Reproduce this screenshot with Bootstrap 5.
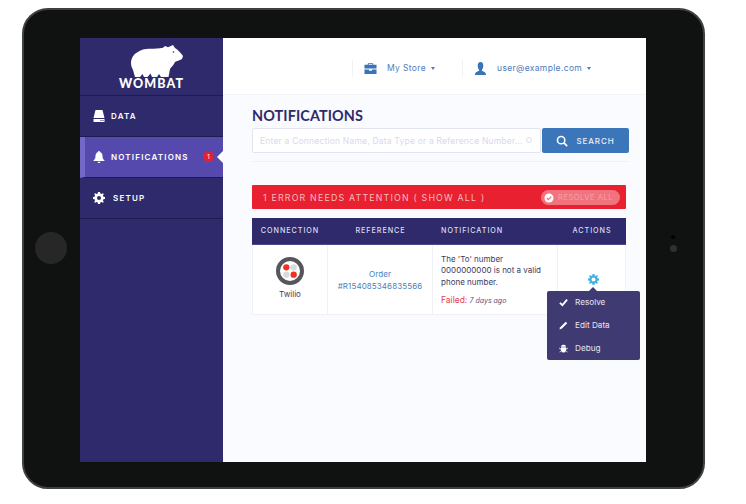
<!DOCTYPE html>
<html lang="en"><head><meta charset="utf-8"><title>Wombat</title>
<link rel="stylesheet" href="https://cdn.jsdelivr.net/npm/bootstrap@5.3.0/dist/css/bootstrap.min.css">
<style>
html,body{height:504px;overflow:hidden;background:#fff}
body{font-family:Inter,"Liberation Sans",sans-serif;padding:8px 41px 15px 22px}
.tablet{position:relative;height:481px;background:#101111;border:2px solid #404040;border-radius:26px;padding:28px 57px 25px 56px}
.homebtn{position:absolute;left:11px;top:222px;width:32px;height:32px;border-radius:50%;background:#272727}
.cam1{position:absolute;left:647px;top:225px;width:4px;height:4px;border-radius:50%;background:#000}
.cam2{position:absolute;left:646px;top:235px;width:7px;height:7px;border-radius:50%;background:#303030}
.screen{height:424px;background:#f9fbfe}
.side{width:143px;flex:none;background:#2f2a6b}
.logo{height:58px;border-bottom:1px solid #1f1b50;padding-top:7px}
.logo svg{margin-left:11px}
.logo span{font-family:Lato,sans-serif;font-weight:900;font-size:12.5px;letter-spacing:1.1px;line-height:13px;color:#fff}
.sidelink{height:41px;padding:0 0 0 13px;color:#fff;font-size:8px;font-weight:600;letter-spacing:1.2px;border-bottom:1px solid #1f1b50;position:relative}
.sidelink:hover{color:#fff}
.sidelink svg{width:12px;height:12px;margin-right:6px;flex:none}
.sidelink.on{background:#5549ad;border-left:5px solid #7268c6;padding-left:8px}
.sidelink.on::after{content:"";position:absolute;right:0;top:14px;border:6px solid transparent;border-right-color:#fff;border-left:0}
.setuptxt{margin-left:2px}
.cnt{width:11px;height:11px;border-radius:50%;background:#e3202f;color:#fff;font-size:6px;letter-spacing:0;font-weight:400;position:absolute;left:118px;top:14px}
.main{min-width:0}
.top{height:57px;background:#fff;border-bottom:1px solid #f0f3f8;padding-top:22px;color:#4a7dbb;font-size:8.5px;letter-spacing:.35px}
.topitem{height:17px;border-left:1px solid #eef1f6;padding-left:11px}
.topitem svg{width:13px;height:13px;color:#3a74b8}
.topitem span{margin-left:10px}
.store{margin-left:129px;width:110px}
.caret{width:0;height:0;border:2.5px solid transparent;border-top:3px solid #4a7dbb;border-bottom:0;margin-left:5px}
.work{padding:0 17px 0 29px}
.ttl{font-family:Lato,sans-serif;font-weight:700;font-size:14.4px;letter-spacing:.1px;color:#2f2a6b;line-height:18px;margin:12px 0 3px}
.srch{height:26px;gap:1px;position:relative}
.srchin{height:25px;width:289px;flex:none;font-size:8.5px;letter-spacing:.2px;border:1px solid #e2e4f2;border-radius:2px;padding:0 7px;background:#fff;color:#dddcf0}
.srchin::placeholder{color:#d9d8ee;opacity:1}
.srchdot{position:absolute;left:274px;top:9px;width:6px;height:6px;border:1px solid #dcdcee;border-radius:50%}
.srchbtn{width:87px;height:25px;background:#3b76bb;color:#e9f0f8;border:0;border-radius:2px;font-size:8px;letter-spacing:.9px;font-weight:500;padding:0}
.srchbtn:hover{background:#3b76bb;color:#e9f0f8}
.srchbtn svg{width:12px;height:12px}
.rule{height:1px;background:#eef1f5;margin:7px 0 23px}
.errbar{width:374px;height:24px;background:#e8202f;color:#f9bcc0;font-size:8.8px;letter-spacing:1.2px;border-radius:1px;padding:1px 6px 0 11px;margin-bottom:9px}
.resolve{width:79px;height:15px;border-radius:8px;background:#f0737d;color:#f7a1a8;font-size:7.5px;letter-spacing:.55px;padding-left:3px;gap:4px}
.resolve svg{width:10px;height:10px}
.notes{width:374px;table-layout:fixed;border-collapse:separate;border-spacing:0;margin:0;background:#fff;font-size:8px;color:#3d3a64}
.notes th{background:#2f2a6b;color:#dcdcee;font-size:7.2px;font-weight:500;letter-spacing:.95px;height:27px;padding:0;text-align:center;border-bottom:1px solid #4d4a8a}
.notes td{height:70px;border-right:1px solid #eff1f5;border-bottom:1px solid #eff1f5;padding:0;text-align:center;vertical-align:middle}
.notes td:first-child{border-left:1px solid #eff1f5;padding-bottom:3px}
.notes td.msg{text-align:left;padding:1px 14px 0 8px;line-height:11.7px}
.notes th.msgh{text-align:left;padding-left:8px}
.notes td.ref{padding-top:1px}
.ref{color:#4d81bd;letter-spacing:.1px;line-height:12px}
.twilio{box-sizing:border-box;width:28px;height:28px;border-radius:50%;border:4.5px solid #55555a;margin:0 auto 3px;display:block}
.fail{color:#e8404a;font-size:8.5px}
.ago{font-style:italic;font-size:7px;color:#55527a}
.msg p{margin:0 0 6px}
.gear{width:11px;height:11px;color:#3fb0e0;position:absolute;left:336px;top:56px}
.actmenu{position:absolute;left:295px;top:73px;width:93px;height:69px;min-width:0;display:block;background:#3f3a71;border:0;border-radius:2px;padding:0;margin:0;font-size:8.2px;z-index:2}
.actmenu::before{content:"";position:absolute;left:42px;top:-4px;border:4px solid transparent;border-bottom-color:#3f3a71;border-top:0}
.actmenu .dropdown-item{height:23px;color:#e6e6f2;padding:0 0 0 12px;gap:7px}
.actmenu svg{width:9px;height:9px;flex:none}
</style></head>
<body>
<div class="tablet">
 <div class="homebtn"></div><div class="cam1"></div><div class="cam2"></div>
 <div class="screen d-flex">
  <aside class="side">
   <div class="logo d-flex flex-column align-items-center">
    <svg width="52" height="32" viewBox="0 0 52 32"><path fill="#fff" d="M0 18C0 13 3 9 6 7.500C10 4.500 14 4 18 3.800C24 3.500 28 4 32 2.800L34 1L37 2.300L42 0L44 3C47 5 49.500 7.500 52 11L51 14C48 15.500 46 16 44 17C43 20 40 22 39 24L37.500 32H30L28 29L26 32H21L19.500 28.500L16.500 32H13L11.500 29L9 32H4L2 25C1 23 0 21 0 18Z"/><circle cx="42.500" cy="7" r=".8" fill="#2f2a6b"/></svg>
    <span>WOMBAT</span>
   </div>
   <nav class="nav flex-column">
    <a class="nav-link sidelink d-flex align-items-center" href="#"><svg viewBox="0 0 12 12"><path fill="#fff" d="M2.500 0H9.500L11.500 8H.5ZM.5 9H11.500V12H.5Z"/><path fill="#2f2a6b" d="M7.500 10H8.500V11H7.500ZM9.500 10H10.500V11H9.500Z"/></svg><span>DATA</span></a>
    <a class="nav-link sidelink on d-flex align-items-center" href="#"><svg viewBox="0 0 12 12"><path fill="#fff" d="M6 0C6.500 0 7 .4 7 1C9 1.500 9.500 3.500 9.500 5C9.500 7 10 8 11.500 9.500V10H.5V9.500C2 8 2.500 7 2.500 5C2.500 3.500 3 1.500 5 1C5 .4 5.500 0 6 0ZM4.500 10.800H7.500C7.300 11.600 6.700 12 6 12S4.700 11.600 4.500 10.800Z"/></svg><span>NOTIFICATIONS</span><span class="cnt d-flex align-items-center justify-content-center">1</span></a>
    <a class="nav-link sidelink d-flex align-items-center" href="#"><svg viewBox="0 0 12 12"><path fill="#fff" fill-rule="evenodd" d="M5 0H7L7.300 1.600L8.500 2.100L9.900 1.200L10.800 2.100L9.900 3.500L10.400 4.700L12 5V7L10.400 7.300L9.900 8.500L10.800 9.900L9.900 10.800L8.500 9.900L7.300 10.400L7 12H5L4.700 10.400L3.500 9.900L2.100 10.800L1.200 9.900L2.100 8.500L1.600 7.300L0 7V5L1.600 4.700L2.100 3.500L1.200 2.100L2.100 1.200L3.500 2.100L4.700 1.600ZM6 4A2 2 0 1 0 6 8A2 2 0 1 0 6 4Z"/></svg><span class="setuptxt">SETUP</span></a>
   </nav>
  </aside>
  <main class="main flex-grow-1">
   <div class="top d-flex">
    <div class="d-flex align-items-center topitem store"><svg viewBox="0 0 14 14"><path fill="currentColor" d="M5 1H9L10 2V3H13.500V7H.5V3H4V2ZM5 2V3H9V2ZM.5 8H5.500V9.500H8.500V8H13.500V13H.5Z"/></svg><span>My Store</span><i class="caret"></i></div>
    <div class="d-flex align-items-center topitem"><svg viewBox="0 0 14 14"><path fill="currentColor" d="M7 0C9.300 0 10 2 10 4C10 6 9.200 7.500 8.500 8.500V9.500C10 10.300 13 11 13 14H1C1 11 4 10.300 5.500 9.500V8.500C4.800 7.500 4 6 4 4C4 2 4.700 0 7 0Z"/></svg><span>user@example.com</span><i class="caret"></i></div>
   </div>
   <div class="work">
    <h1 class="ttl">NOTIFICATIONS</h1>
    <div class="srch d-flex">
     <input class="srchin form-control" placeholder="Enter a Connection Name, Data Type or a Reference Number...">
     <i class="srchdot"></i>
     <button class="srchbtn btn d-flex align-items-center justify-content-center gap-2"><svg viewBox="0 0 14 14"><circle cx="6" cy="6" r="4.300" fill="none" stroke="#fff" stroke-width="1.800"/><path d="M9 9L13 13" stroke="#fff" stroke-width="2"/></svg><span>SEARCH</span></button>
    </div>
    <div class="rule"></div>
    <div class="errbar d-flex align-items-center justify-content-between">
     <span>1 ERROR NEEDS ATTENTION ( SHOW ALL )</span>
     <span class="resolve d-flex align-items-center"><svg viewBox="0 0 10 10"><circle cx="5" cy="5" r="4.500" fill="#fff"/><path d="M2.800 5L4.400 6.600L7.300 3.600" fill="none" stroke="#f0737d" stroke-width="1.300"/></svg>RESOLVE ALL</span>
    </div>
    <div class="position-relative">
    <table class="notes">
     <colgroup><col style="width:76px"><col style="width:105px"><col style="width:125px"><col style="width:68px"></colgroup>
     <thead><tr><th>CONNECTION</th><th>REFERENCE</th><th class="msgh">NOTIFICATION</th><th>ACTIONS</th></tr></thead>
     <tbody><tr>
      <td><svg class="twilio" viewBox="0 0 19 19"><circle cx="6" cy="6" r="3" fill="#f0311f"/><circle cx="13" cy="6" r="3" fill="#d7dbdd"/><circle cx="6" cy="13" r="3" fill="#d7dbdd"/><circle cx="13" cy="13" r="3" fill="#f0311f"/></svg>Twilio</td>
      <td class="ref">Order<br>#R154085346835566</td>
      <td class="msg"><p>The 'To' number 0000000000 is not a valid phone number.</p><span class="fail">Failed:</span> <span class="ago">7 days ago</span></td>
      <td></td>
     </tr></tbody>
    </table>
    <svg class="gear" viewBox="0 0 12 12"><path fill="currentColor" fill-rule="evenodd" d="M5 0H7L7.300 1.600L8.500 2.100L9.900 1.200L10.800 2.100L9.900 3.500L10.400 4.700L12 5V7L10.400 7.300L9.900 8.500L10.800 9.900L9.900 10.800L8.500 9.900L7.300 10.400L7 12H5L4.700 10.400L3.500 9.900L2.100 10.800L1.200 9.900L2.100 8.500L1.600 7.300L0 7V5L1.600 4.700L2.100 3.500L1.200 2.100L2.100 1.200L3.500 2.100L4.700 1.600ZM6 3.800A2.200 2.200 0 1 0 6 8.200A2.200 2.200 0 1 0 6 3.800Z"/></svg>
    <div class="actmenu dropdown-menu">
     <a class="dropdown-item d-flex align-items-center" href="#"><svg viewBox="0 0 10 10"><path fill="none" stroke="#fff" stroke-width="2" d="M1 5.500L3.800 8L9 1.800"/></svg>Resolve</a>
     <a class="dropdown-item d-flex align-items-center" href="#"><svg viewBox="0 0 10 10"><path fill="#fff" d="M7.500.8L9.200 2.500L3 8.700L.5 9.500L1.300 7Z"/></svg>Edit Data</a>
     <a class="dropdown-item d-flex align-items-center" href="#"><svg viewBox="0 0 10 10"><path fill="#fff" d="M3 1.500C3.500 .7 6.500 .7 7 1.500L8 3H2ZM2.500 3.500H7.500C8 5 8 7 7.500 8C7 9 6 9.500 5 9.500S3 9 2.500 8C2 7 2 5 2.500 3.500ZM.5 4L2 5V6L.5 5.500ZM9.500 4L8 5V6L9.500 5.500ZM.5 9L2 7.500V8.500L1 9.500ZM9.500 9L8 7.500V8.500L9 9.500Z"/></svg>Debug</a>
    </div>
    </div>
   </div>
  </main>
 </div>
</div>
<script src="https://cdn.jsdelivr.net/npm/bootstrap@5.3.0/dist/js/bootstrap.bundle.min.js"></script>
</body></html>
